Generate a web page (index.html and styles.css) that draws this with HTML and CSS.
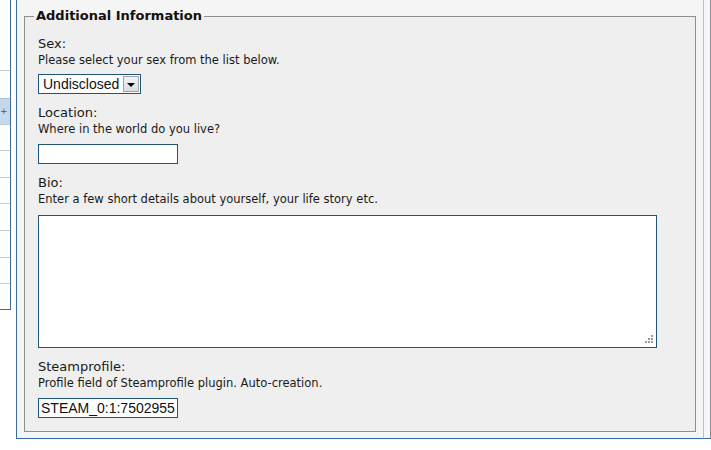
FILE: index.html
```html
<!DOCTYPE html>
<html>
<head>
<meta charset="utf-8">
<link rel="stylesheet" href="styles.css">
</head>
<body>
<div class="page">
  <div class="sidebar">
    <div class="side-list">
      <div class="side-row first"></div>
      <div class="side-row active"><span class="side-glyph">+</span></div>
      <div class="side-row"></div>
      <div class="side-row tall"></div>
      <div class="side-row"></div>
      <div class="side-row tall"></div>
      <div class="side-row tall"></div>
      <div class="side-row"></div>
      <div class="side-row"></div>
    </div>
  </div>
  <div class="gap"></div>
  <div class="main">
    <fieldset class="box">
      <legend>Additional Information</legend>

      <div class="field">
        <div class="label">Sex:</div>
        <div class="desc">Please select your sex from the list below.</div>
        <div class="select">
          <span class="select-value">Undisclosed</span>
          <span class="select-btn"><span class="tri"></span></span>
        </div>
      </div>

      <div class="field">
        <div class="label">Location:</div>
        <div class="desc">Where in the world do you live?</div>
        <input class="text" type="text" value="">
      </div>

      <div class="field">
        <div class="label">Bio:</div>
        <div class="desc">Enter a few short details about yourself, your life story etc.</div>
        <div class="area-wrap">
          <textarea class="area"></textarea>
          <svg class="grip" width="9" height="9" viewBox="0 0 9 9">
            <rect x="7" y="0" width="2" height="2" fill="#9a9a9a"/>
            <rect x="4" y="3" width="2" height="2" fill="#9a9a9a"/>
            <rect x="7" y="3" width="2" height="2" fill="#9a9a9a"/>
            <rect x="1" y="6" width="2" height="2" fill="#9a9a9a"/>
            <rect x="4" y="6" width="2" height="2" fill="#9a9a9a"/>
            <rect x="7" y="6" width="2" height="2" fill="#9a9a9a"/>
          </svg>
        </div>
      </div>

      <div class="field last">
        <div class="label">Steamprofile:</div>
        <div class="desc">Profile field of Steamprofile plugin. Auto-creation.</div>
        <input class="text" type="text" value="STEAM_0:1:7502955">
      </div>
    </fieldset>
  </div>
  <div class="right-strip"></div>
</div>
</body>
</html>
```

FILE: styles.css
```css
html, body {
  margin: 0;
  padding: 0;
  background: #ffffff;
}

.page {
  display: flex;
  align-items: flex-start;
  width: 711px;
  height: 450px;
  overflow: hidden;
  font-family: "DejaVu Sans", Verdana, sans-serif;
  color: #1a1a1a;
}

.sidebar {
  width: 10px;
  flex: none;
  border-right: 1px solid #3c6c9c;
  border-bottom: 1px solid #3c6c9c;
  background: #ffffff;
}

.side-list {
  padding-top: 70px;
}

.side-row {
  height: 25px;
  border-top: 1px solid #c3cdd8;
  position: relative;
}

.side-row.first {
  height: 27px;
}

.side-row.tall {
  height: 26px;
}

.side-row.active {
  background: #c5d8ec;
  border-top-color: #a9c2dc;
}

.side-glyph {
  position: absolute;
  left: 0;
  top: 7px;
  font-size: 9px;
  line-height: 10px;
  color: #556;
}

.gap {
  width: 5px;
  flex: none;
}

.main {
  width: 672px;
  height: 430px;
  flex: none;
  background: #f5f5f5;
  border-left: 1px solid #3c6c9c;
  border-right: 1px solid #a8c3df;
  border-bottom: 1px solid #3c6c9c;
  padding: 8px 7px 0 7px;
  display: flex;
  flex-direction: column;
  align-items: stretch;
}

.right-strip {
  flex: none;
  width: 7px;
  height: 439px;
  background: #f4f6f9;
  border-right: 1px solid #8d8d8d;
  border-bottom: 1px solid #3c6c9c;
  box-sizing: border-box;
}

.box {
  margin: 0;
  border: 1px solid #8e8e8e;
  background: #efefef;
  padding: 11px 13px 13px 13px;
  min-width: 0;
}

.box legend {
  font-weight: bold;
  font-size: 13px;
  line-height: 16px;
  padding: 0 2px;
  margin-left: -4px;
  color: #111;
}

.field {
  display: flex;
  flex-direction: column;
  align-items: flex-start;
  margin-bottom: 10px;
}

.field.last {
  margin-bottom: 0;
}

.label {
  font-size: 13px;
  line-height: 17px;
}

.desc {
  font-size: 11.5px;
  line-height: 14px;
  padding-top: 1px;
  margin-bottom: 7px;
}

.select {
  display: flex;
  align-items: center;
  width: 103px;
  height: 20px;
  box-sizing: border-box;
  border: 1px solid #1f5575;
  background: #fff;
  font-family: "Liberation Sans", Arial, sans-serif;
  font-size: 14px;
  position: relative;
}

.select-value {
  flex: 1;
  padding-left: 4px;
  line-height: 18px;
  color: #111;
}

.select-btn {
  width: 16px;
  height: 16px;
  margin-right: 1px;
  box-sizing: border-box;
  border: 1px solid #9aa3ab;
  background: linear-gradient(#f3f3f3, #d9dcdf);
  display: flex;
  align-items: center;
  justify-content: center;
}

.tri {
  width: 0;
  height: 0;
  border-left: 4px solid transparent;
  border-right: 4px solid transparent;
  border-top: 4px solid #000;
  margin-top: 1px;
}

.text {
  width: 140px;
  height: 20px;
  box-sizing: border-box;
  margin: 1px 0 0 0;
  border: 1px solid #1f5575;
  background: #fff;
  padding: 0 2px;
  font-family: "Liberation Sans", Arial, sans-serif;
  font-size: 14px;
  color: #111;
  outline: none;
}

.area-wrap {
  position: relative;
  margin-top: 2px;
  width: 619px;
  height: 133px;
}

.area {
  display: block;
  width: 619px;
  height: 133px;
  box-sizing: border-box;
  margin: 0;
  border: 1px solid #1f5575;
  background: #fff;
  resize: none;
  outline: none;
}

.grip {
  position: absolute;
  right: 4px;
  bottom: 4px;
}
```
